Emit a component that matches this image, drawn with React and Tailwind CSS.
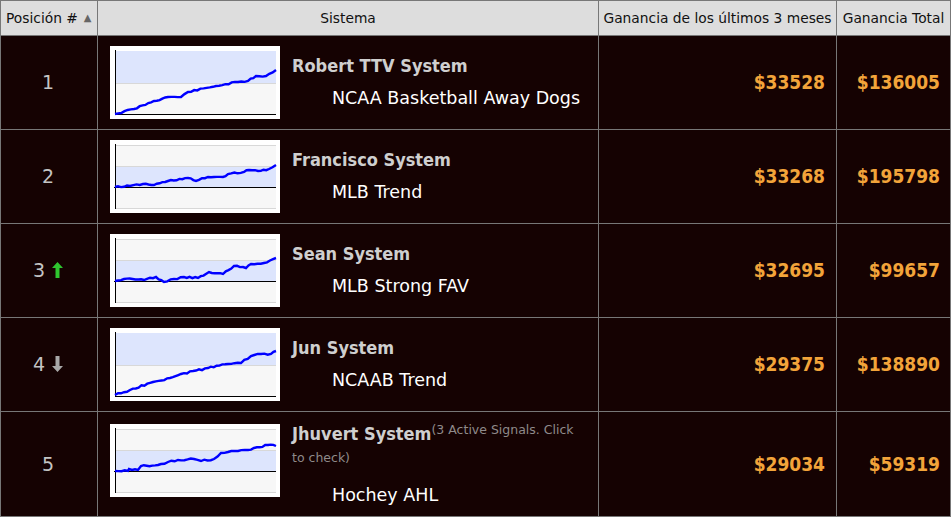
import React from "react";

const FONT = { fontFamily: "'DejaVu Sans', sans-serif" };
const BOLD = { fontFamily: "'DejaVu Sans Condensed', 'DejaVu Sans', sans-serif" };

// chart lines, local coords inside a 170x73 box
const ROWS = [
  {
    pos: "1",
    trend: null,
    name: "Robert TTV System",
    signals: null,
    sport: "NCAA Basketball Away Dogs",
    last3: "$33528",
    total: "$136005",
    band: "upper",
    pts: [[5, 68], [24, 63], [44, 55], [58, 51], [71, 51], [78, 46], [106, 40], [128, 36], [138, 35], [146, 30], [156, 30], [166, 24]],
  },
  {
    pos: "2",
    trend: null,
    name: "Francisco System",
    signals: null,
    sport: "MLB Trend",
    last3: "$33268",
    total: "$195798",
    band: "mid",
    pts: [[5, 47], [20, 46], [33, 44], [44, 45], [58, 41], [78, 38], [86, 41], [98, 37], [113, 37], [118, 34], [134, 32], [139, 30], [148, 31], [159, 29], [166, 25]],
  },
  {
    pos: "3",
    trend: "up",
    name: "Sean System",
    signals: null,
    sport: "MLB Strong FAV",
    last3: "$32695",
    total: "$99657",
    band: "mid",
    pts: [[5, 47], [14, 45], [34, 46], [46, 43], [54, 48], [64, 45], [74, 43], [88, 44], [99, 38], [113, 40], [124, 32], [136, 34], [141, 30], [154, 29], [166, 24]],
  },
  {
    pos: "4",
    trend: "down",
    name: "Jun System",
    signals: null,
    sport: "NCAAB Trend",
    last3: "$29375",
    total: "$138890",
    band: "upper",
    pts: [[5, 67], [20, 62], [43, 54], [60, 50], [71, 46], [98, 40], [118, 36], [131, 35], [141, 28], [151, 26], [161, 26], [166, 23]],
  },
  {
    pos: "5",
    trend: null,
    name: "Jhuvert System",
    signals: "(3 Active Signals. Click to check)",
    sport: "Hochey AHL",
    last3: "$29034",
    total: "$59319",
    band: "mid",
    pts: [[5, 47], [18, 47], [19, 45], [28, 46], [31, 42], [48, 41], [51, 40], [58, 38], [68, 36], [84, 35], [91, 37], [104, 35], [111, 29], [118, 28], [128, 27], [138, 26], [144, 24], [158, 21], [166, 22]],
  },
];

// turn the rough points into a little staircase so it looks like the original plots
const stepPath = (pts, seed) => {
  let s = seed;
  const rnd = () => {
    s = (s * 9301 + 49297) % 233280;
    return s / 233280;
  };
  const out = [];
  for (let i = 0; i < pts.length - 1; i++) {
    const [x1, y1] = pts[i];
    const [x2, y2] = pts[i + 1];
    const n = Math.max(1, Math.round((x2 - x1) / 3));
    for (let k = 0; k < n; k++) {
      const t = k / n;
      const x = x1 + (x2 - x1) * t;
      const y = y1 + (y2 - y1) * t + (k === 0 ? 0 : (rnd() - 0.5) * 1.6);
      out.push(`${x.toFixed(1)},${y.toFixed(1)}`);
    }
  }
  const last = pts[pts.length - 1];
  out.push(`${last[0]},${last[1]}`);
  return out.join(" ");
};

const Chart = ({ band, pts, seed, className = "" }) => (
  <svg width="170" height="73" viewBox="0 0 170 73" className={`block shrink-0 ${className}`}>
    <rect x="0" y="0" width="170" height="73" fill="#ffffff" />
    <rect x="5" y="5" width="161" height="63" fill="#f7f7f7" />
    {band === "upper" ? (
      <>
        <rect x="5" y="5" width="161" height="32" fill="#dde5fd" />
        <line x1="5" y1="37.5" x2="166" y2="37.5" stroke="#d8d8d8" />
        <line x1="5" y1="68.5" x2="166" y2="68.5" stroke="#000" />
      </>
    ) : (
      <>
        <rect x="5" y="26" width="161" height="21" fill="#dde5fd" />
        <line x1="5" y1="5.5" x2="166" y2="5.5" stroke="#d8d8d8" />
        <line x1="5" y1="26.5" x2="166" y2="26.5" stroke="#d8d8d8" />
        <line x1="5" y1="68.5" x2="166" y2="68.5" stroke="#d8d8d8" />
        <line x1="4" y1="47.5" x2="166" y2="47.5" stroke="#000" />
      </>
    )}
    <line x1="5.5" y1="4" x2="5.5" y2="69" stroke="#000" />
    <polyline points={stepPath(pts, seed)} fill="none" stroke="#0000ff" strokeWidth="2.4" strokeLinejoin="miter" />
  </svg>
);

const Arrow = ({ dir }) => (
  <svg width="11" height="16" viewBox="0 0 11 16" className="inline-block ml-[7px] -mt-[3px] align-middle">
    {dir === "up" ? (
      <path d="M5.5 0 L11 6 L7.5 6 L7.5 16 L3.5 16 L3.5 6 L0 6 Z" fill="#2fc52f" />
    ) : (
      <path d="M5.5 16 L11 10 L7.5 10 L7.5 0 L3.5 0 L3.5 10 L0 10 Z" fill="#a8a8a8" />
    )}
  </svg>
);

export default function App() {
  return (
    <div className="w-[951px] h-[517px] overflow-hidden bg-[#150202]" style={FONT}>
      <table className="w-[950px] table-fixed border-collapse">
        <colgroup>
          <col className="w-[97px]" />
          <col className="w-[501px]" />
          <col className="w-[238px]" />
          <col className="w-[114px]" />
        </colgroup>
        <thead>
          <tr className="h-[35px] bg-[#dddddd] text-[#111] text-[13.8px]">
            <th className="border border-[#777] font-normal text-left pl-[5px] whitespace-nowrap">
              Posición #
              <span className="inline-block ml-[6px] text-[#666] text-[10px] align-[2px]">▲</span>
            </th>
            <th className="border border-[#777] font-normal">Sistema</th>
            <th className="border border-[#777] font-normal whitespace-nowrap">Ganancia de los últimos 3 meses</th>
            <th className="border border-[#777] font-normal whitespace-nowrap">Ganancia Total</th>
          </tr>
        </thead>
        <tbody>
          {ROWS.map((r, i) => (
            <tr key={r.pos} className={i === 4 ? "h-[105px]" : "h-[94px]"}>
              <td className="border border-[#777] text-center text-[19px] text-[#c4c4c4] pr-[2px]">
                {r.pos}
                {r.trend && <Arrow dir={r.trend} />}
              </td>
              <td className="border border-[#777] px-[12px]">
                <div className="flex items-center gap-[12px]">
                  <Chart
                    band={r.band}
                    pts={r.pts}
                    seed={i * 37 + 11}
                    className={r.signals ? "self-start mt-[3px]" : ""}
                  />
                  <div className={`flex-1 ${r.signals ? "-mt-[4px]" : "-mt-[2px]"}`}>
                    <div className="leading-[23px] text-[18px] font-bold text-[#cfcfcf]" style={BOLD}>
                      {r.name}
                      {r.signals && (
                        <span
                          className="font-normal text-[12.5px] leading-[26px] text-[#8f8a8a] align-[6px]"
                          style={FONT}
                        >
                          {r.signals}
                        </span>
                      )}
                    </div>
                    <div className={`pl-[40px] leading-[23px] text-[17.5px] text-white ${r.signals ? "mt-[11px]" : "mt-[10px]"}`}>
                      {r.sport}
                    </div>
                  </div>
                </div>
              </td>
              <td className="border border-[#777] text-right pr-[11px] text-[19px] font-bold text-[#f2a43a]" style={BOLD}>{r.last3}</td>
              <td className="border border-[#777] text-right pr-[10px] text-[19px] font-bold text-[#f2a43a]" style={BOLD}>{r.total}</td>
            </tr>
          ))}
        </tbody>
      </table>
    </div>
  );
}
